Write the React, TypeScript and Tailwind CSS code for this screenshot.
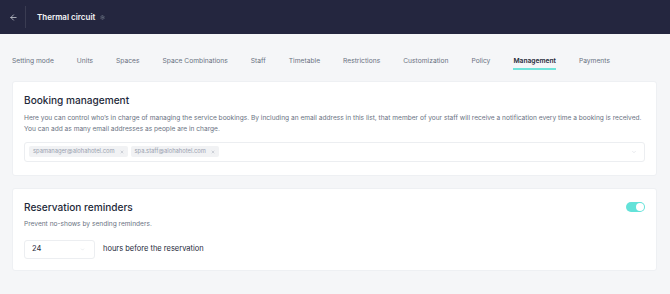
import { ArrowLeft, ChevronDown, Settings, X } from "lucide-react";

const tabs = [
  "Setting mode",
  "Units",
  "Spaces",
  "Space Combinations",
  "Staff",
  "Timetable",
  "Restrictions",
  "Customization",
  "Policy",
  "Management",
  "Payments",
];

const emails = ["spamanager@alohahotel.com", "spa.staff@alohahotel.com"];

export default function App() {
  return (
    <div className="min-h-[294px] bg-[#f5f6f8] font-['Inter',sans-serif]">
      <header className="flex h-[34px] items-center bg-[#24263f] pl-[9px]">
        <ArrowLeft className="h-[9px] w-[9px] text-gray-300" strokeWidth={2} />
        <div className="ml-[7px] h-[22px] w-px bg-white/10" />
        <h1 className="ml-[11px] text-[8px] font-semibold text-gray-100">Thermal circuit</h1>
        <Settings className="ml-[5px] h-[5px] w-[5px] text-gray-500" strokeWidth={3} />
      </header>

      <nav className="flex gap-[23px] px-[12px] pt-[21px]">
        {tabs.map((tab) => {
          const active = tab === "Management";
          return (
            <div key={tab} className="flex flex-col items-center">
              <span
                className={
                  active
                    ? "text-[6.7px] leading-[12px] font-semibold text-gray-800"
                    : "text-[6.7px] leading-[12px] text-gray-500"
                }
              >
                {tab}
              </span>
              <div className={active ? "mt-[1px] h-[1.5px] w-full bg-[#6fe3da]" : "mt-[1px] h-[1.5px] w-full"} />
            </div>
          );
        })}
      </nav>

      <main className="flex flex-col gap-[12px] pt-[11px] pl-[12px] pr-[13px]">
        <section className="rounded-[3px] border border-[#eef0f3] bg-white px-[11px] pt-[11px] pb-[13px]">
          <h2 className="text-[10.1px] leading-[14px] font-medium text-gray-800">Booking management</h2>
          <p className="mt-[6px] text-[6.6px] leading-[11px] text-gray-500">
            Here you can control who’s in charge of managing the service bookings. By including an email address in this list, that member of your staff will receive a notification every time a booking is received.
            <br />
            You can add as many email addresses as people are in charge.
          </p>
          <div className="mt-[7px] flex h-[20px] items-center rounded-[3px] border border-[#eceef1] pl-[4px] pr-[7px]">
            <div className="flex flex-1 gap-[3px]">
              {emails.map((email) => (
                <span
                  key={email}
                  className="flex h-[11px] items-center gap-[5px] rounded-[2px] bg-[#f1f2f4] px-[4px] text-[5.8px] text-gray-400"
                >
                  {email}
                  <X className="h-[4px] w-[4px]" strokeWidth={2.5} />
                </span>
              ))}
            </div>
            <ChevronDown className="h-[6px] w-[6px] text-gray-300" strokeWidth={2} />
          </div>
        </section>

        <section className="rounded-[3px] border border-[#eef0f3] bg-white px-[11px] pt-[11px] pb-[11px]">
          <div className="flex items-center justify-between">
            <h2 className="text-[10.1px] leading-[14px] font-medium text-gray-800">Reservation reminders</h2>
            <div className="flex h-[10px] w-[19px] items-center justify-end rounded-full bg-[#63e2d9] pr-[1px]">
              <div className="h-[8px] w-[8px] rounded-full bg-white" />
            </div>
          </div>
          <p className="mt-[5px] text-[6.6px] leading-[10px] text-gray-500">Prevent no-shows by sending reminders.</p>
          <div className="mt-[11px] flex items-center gap-[8px]">
            <div className="flex h-[19px] w-[71px] items-center justify-between rounded-[3px] border border-[#eceef1] pl-[7px] pr-[9px]">
              <span className="text-[7.5px] text-gray-800">24</span>
              <ChevronDown className="h-[5px] w-[5px] text-gray-300" strokeWidth={2} />
            </div>
            <span className="text-[7.5px] text-gray-800">hours before the reservation</span>
          </div>
        </section>
      </main>
    </div>
  );
}
